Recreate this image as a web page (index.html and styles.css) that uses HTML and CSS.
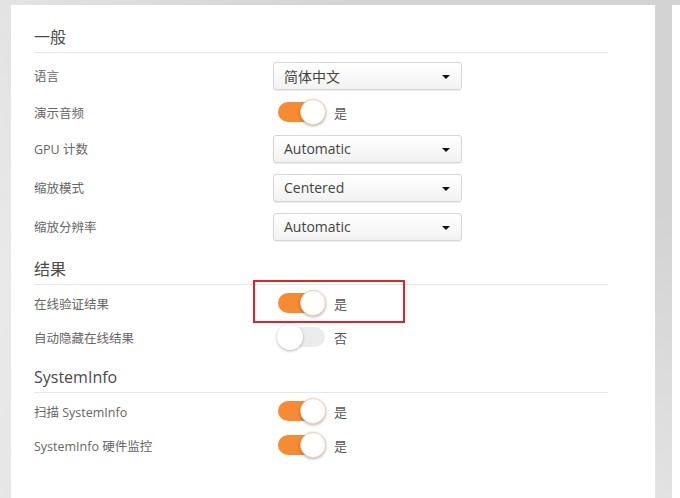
FILE: index.html
```html
<!DOCTYPE html>
<html lang="zh-CN">
<head>
    <meta charset="UTF-8">
    <meta name="viewport" content="width=device-width, initial-scale=1.0">
    <title>设置</title>
    <link rel="stylesheet" href="styles.css">
</head>
<body>
    <div class="page">
        <div class="panel">
            <h2 class="section-title first">一般</h2>
            <div class="row tall">
                <span class="label">语言</span>
                <div class="select"><span>简体中文</span><i class="caret"></i></div>
            </div>
            <div class="row">
                <span class="label">演示音频</span>
                <div class="toggle on"><span class="knob"></span></div>
                <span class="state">是</span>
            </div>
            <div class="row tall">
                <span class="label">GPU 计数</span>
                <div class="select"><span>Automatic</span><i class="caret"></i></div>
            </div>
            <div class="row tall">
                <span class="label">缩放模式</span>
                <div class="select"><span>Centered</span><i class="caret"></i></div>
            </div>
            <div class="row tall">
                <span class="label">缩放分辨率</span>
                <div class="select"><span>Automatic</span><i class="caret"></i></div>
            </div>

            <h2 class="section-title">结果</h2>
            <div class="row">
                <span class="label">在线验证结果</span>
                <div class="toggle on"><span class="knob"></span></div>
                <span class="state">是</span>
                <div class="highlight"></div>
            </div>
            <div class="row">
                <span class="label">自动隐藏在线结果</span>
                <div class="toggle"><span class="knob"></span></div>
                <span class="state">否</span>
            </div>

            <h2 class="section-title">SystemInfo</h2>
            <div class="row">
                <span class="label">扫描 SystemInfo</span>
                <div class="toggle on"><span class="knob"></span></div>
                <span class="state">是</span>
            </div>
            <div class="row">
                <span class="label">SystemInfo 硬件监控</span>
                <div class="toggle on"><span class="knob"></span></div>
                <span class="state">是</span>
            </div>
        </div>
        <div class="panel side"></div>
    </div>
</body>
</html>
```

FILE: styles.css
```css
*{
    margin: 0;
    padding: 0;
    box-sizing: border-box;
}

html, body{
    height: 100%;
    overflow: hidden;
}

body{
    background-color: #dcdcdc;
    background-image:
        linear-gradient(115deg, rgba(255,255,255,0.35) 0%, rgba(255,255,255,0) 40%),
        linear-gradient(200deg, rgba(0,0,0,0.04) 30%, rgba(255,255,255,0.2) 70%);
    font-family: "Open Sans", "Noto Sans CJK SC", sans-serif;
    color: #555;
}

.page{
    display: flex;
    gap: 17px;
    padding: 5px 0 0 11px;
    height: 100%;
    width: 100%;
    overflow: hidden;
}

.panel{
    flex: 0 0 644px;
    background: #fff;
    padding: 0 47px 0 23px;
}

.panel.side{
    flex: 1 1 auto;
    min-width: 0;
    padding: 0;
}

.section-title{
    font-size: 16px;
    font-weight: normal;
    color: #4a4a4a;
    line-height: 29px;
    height: 30px;
    border-bottom: 1px solid #e6e6e6;
    margin-top: 9px;
    margin-bottom: 1px;
}

.section-title.first{
    margin-top: 18px;
    margin-bottom: 3px;
}

.row{
    position: relative;
    display: flex;
    align-items: center;
    height: 34px;
}

.row.tall{
    height: 39px;
}

.label{
    flex: 0 0 239px;
    font-size: 12.5px;
    color: #666;
}

.select{
    width: 189px;
    height: 28px;
    border: 1px solid #d6d6d6;
    border-radius: 3px;
    background: linear-gradient(#ffffff, #f2f2f2);
    box-shadow: 0 1px 1px rgba(0,0,0,0.08);
    display: flex;
    align-items: center;
    justify-content: space-between;
    padding: 0 11px 0 10px;
    font-size: 14px;
    color: #444;
}

.caret{
    width: 0;
    height: 0;
    border-left: 4px solid transparent;
    border-right: 4px solid transparent;
    border-top: 4px solid #111;
    margin-top: 2px;
}

.toggle{
    position: relative;
    width: 47px;
    height: 20px;
    border-radius: 10px;
    background: #ececec;
    margin-left: 5px;
}

.toggle.on{
    background: #f68b33;
}

.knob{
    position: absolute;
    top: -3px;
    left: -1px;
    width: 26px;
    height: 26px;
    border-radius: 50%;
    background: #fff;
    box-shadow: 0 1px 3px rgba(0,0,0,0.3);
}

.toggle.on .knob{
    left: auto;
    right: -1px;
    border: 1px solid #f3d2b6;
}

.state{
    margin-left: 9px;
    font-size: 13px;
    color: #555;
}

.highlight{
    position: absolute;
    left: 219px;
    top: -6px;
    width: 152px;
    height: 43px;
    border: 2px solid #e3202c;
}
```
